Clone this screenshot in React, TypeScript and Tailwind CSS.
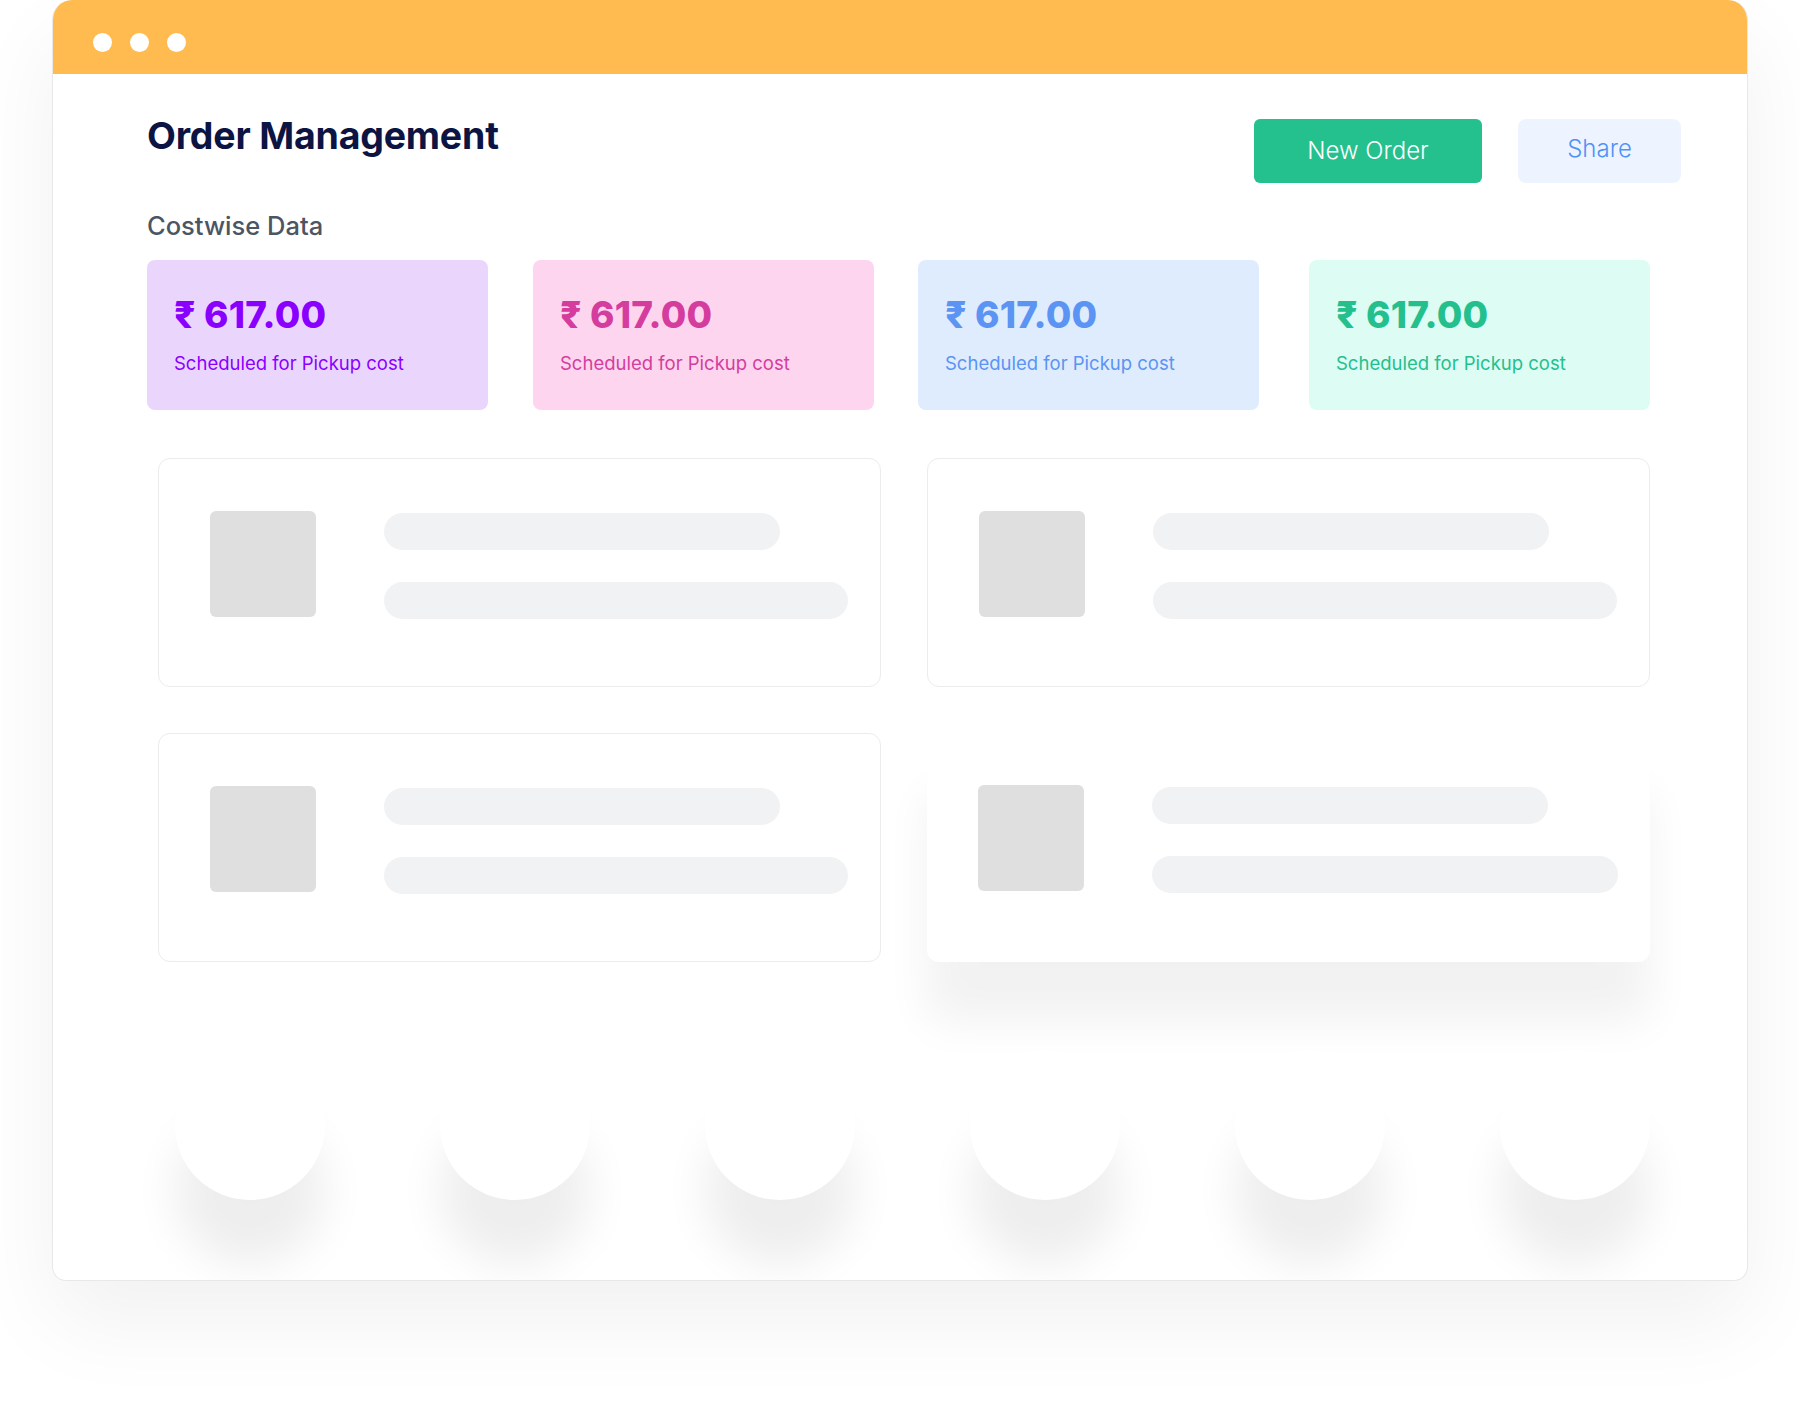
const stats = [
  { bg: "bg-[#ead6fd]", text: "text-[#8a00ff]", gap: "ml-0" },
  { bg: "bg-[#fdd5ef]", text: "text-[#d43d9e]", gap: "ml-[45px]" },
  { bg: "bg-[#dfecfd]", text: "text-[#5b94f3]", gap: "ml-[44px]" },
  { bg: "bg-[#ddfcf3]", text: "text-[#23c08e]", gap: "ml-[50px]" },
];

function SkeletonCard({ floating = false }: { floating?: boolean }) {
  return (
    <div
      className={`h-[229px] rounded-xl bg-white flex items-start pt-[52px] pl-[51px] pr-[32px] ${
        floating ? "shadow-[0_60px_45px_rgba(0,0,0,0.055)]" : "border border-[#ececec]"
      }`}
    >
      <div className="w-[106px] h-[106px] rounded-md bg-[#dfdfdf] shrink-0" />
      <div className="flex-1 ml-[68px] pt-[2px] flex flex-col gap-[32px]">
        <div className="w-[396px] h-[37px] rounded-full bg-[#f1f2f4]" />
        <div className="w-full h-[37px] rounded-full bg-[#f1f2f4]" />
      </div>
    </div>
  );
}

export default function App() {
  return (
    <div className="w-[1800px] h-[1410px] bg-white overflow-hidden font-['Inter',sans-serif]">
      <div className="ml-[52px] w-[1696px] h-[1281px] bg-white rounded-t-[20px] rounded-b-[14px] border border-t-0 border-[#e8e8e8] overflow-hidden shadow-[0_40px_90px_rgba(0,0,0,0.06)]">
        {/* title bar */}
        <div className="h-[74px] bg-[#ffbb50] flex items-start gap-[18px] pl-[40px] pt-[33px]">
          <span className="w-[19px] h-[19px] rounded-full bg-white" />
          <span className="w-[19px] h-[19px] rounded-full bg-white" />
          <span className="w-[19px] h-[19px] rounded-full bg-white" />
        </div>

        <div className="pl-[94px]">
          <div className="w-[1534px] pt-[43px] flex justify-between items-start">
            <h1 className="text-[37.5px] leading-none font-bold tracking-[-0.2px] text-[#0b1442]">Order Management</h1>
            <div className="mt-[2px] flex gap-[36px]">
              <button className="w-[228px] h-[64px] rounded-md bg-[#24c18f] text-white text-[24px] font-light">
                New Order
              </button>
              <button className="w-[163px] h-[64px] rounded-lg bg-[#eef4ff] text-[#4d92f7] text-[24px] font-light pb-[4px]">
                Share
              </button>
            </div>
          </div>

          <h2 className="mt-[30px] text-[25.5px] leading-none font-medium text-[#4b5563]">Costwise Data</h2>

          <div className="mt-[21px] flex">
            {stats.map((s, i) => (
              <div key={i} className={`w-[341px] h-[150px] rounded-lg ${s.gap} ${s.bg} pl-[27px] pt-[36px]`}>
                <div className={`text-[37px] leading-none font-extrabold tracking-[0.2px] ${s.text}`}>₹ 617.00</div>
                <div className={`mt-[21px] text-[18.5px] leading-none ${s.text}`}>Scheduled for Pickup cost</div>
              </div>
            ))}
          </div>

          <div className="mt-[48px] ml-[11px] w-[1492px] grid grid-cols-2 gap-[46px]">
            <SkeletonCard />
            <SkeletonCard />
            <SkeletonCard />
            <SkeletonCard floating />
          </div>

          <div className="mt-[88px] ml-[28px] flex gap-[115px]">
            {[0, 1, 2, 3, 4, 5].map((i) => (
              <div key={i} className="w-[150px] h-[150px] rounded-full bg-white shadow-[0_65px_45px_rgba(0,0,0,0.07)]" />
            ))}
          </div>
        </div>
      </div>
    </div>
  );
}
